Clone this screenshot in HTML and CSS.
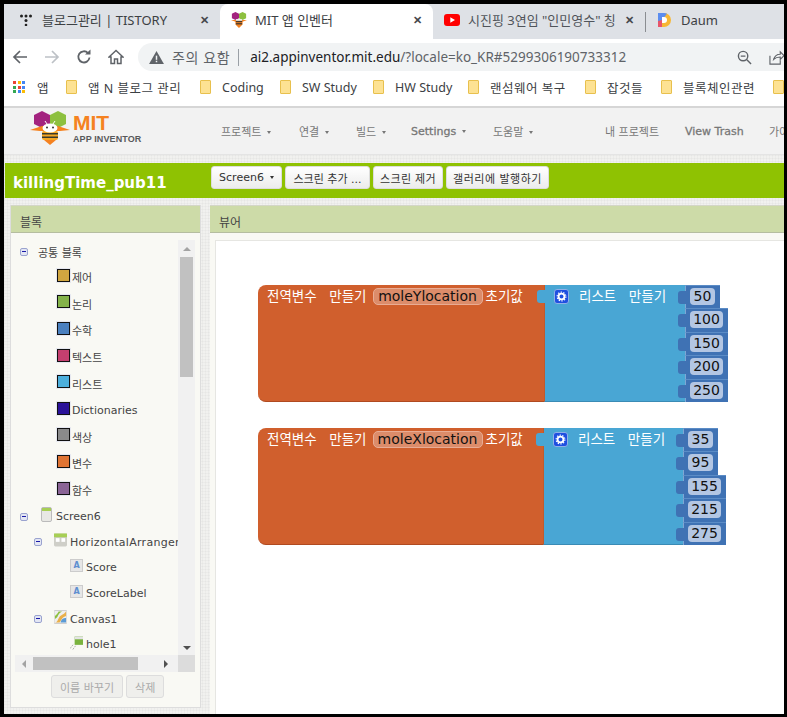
FILE: index.html
```html
<!DOCTYPE html>
<html lang="ko">
<head>
  <meta charset="UTF-8">
  <title>MIT 앱 인벤터</title>
  <link rel="stylesheet" href="styles.css">
</head>
<body>

<div class="window">

  <!-- Browser chrome -->
  <div class="tabstrip">
    <div class="tab tab-first">
      <svg class="tab-icon" viewBox="0 0 12 12"><circle cx="1.500" cy="2" r="1.500" fill="#222"/><circle cx="6" cy="2" r="1.500" fill="#222"/><circle cx="10.500" cy="2" r="1.500" fill="#222"/><circle cx="6" cy="6.500" r="1.500" fill="#222"/><circle cx="6" cy="11" r="1.300" fill="#222"/></svg>
      <span class="tab-title">블로그관리 | TISTORY</span>
      <span class="tab-close">✕</span>
    </div>
    <div class="tab tab-active">
      <svg class="tab-icon" viewBox="0 0 18 18"><polygon points="5,0 9,2 9,7 5,9 1,7 1,2" fill="#a3237f"/><polygon points="13,0 17,2 17,7 13,9 9,7 9,2" fill="#8dc03f"/><path d="M0 9h18l-5 2v3l-4 4-4-4v-3z" fill="#f58220"/><rect x="5.500" y="8" width="7" height="2" fill="#eee"/><rect x="5.500" y="10" width="7" height="1.500" fill="#4a3a2a"/><rect x="5.500" y="12.500" width="7" height="1.500" fill="#4a3a2a"/></svg>
      <span class="tab-title">MIT 앱 인벤터</span>
      <span class="tab-close">✕</span>
    </div>
    <div class="tab tab-third">
      <svg class="tab-icon" viewBox="0 0 16 12"><rect width="16" height="12" rx="3" fill="#f00"/><polygon points="6.300,3.200 11,6 6.300,8.800" fill="#fff"/></svg>
      <span class="tab-title tab-cut">시진핑 3연임 "인민영수" 칭</span>
      <span class="tab-close">✕</span>
    </div>
    <div class="tab tab-last">
      <svg class="tab-icon" viewBox="0 0 16 16"><path d="M1 1h6a7 7 0 0 1 0 14H1z" fill="#f7b733"/><path d="M1 1h6a7 7 0 0 1 3 .7L5 8v7H1z" fill="#5b8def"/><path d="M1 15V9l4-1v7z" fill="#e8556a"/><path d="M5 5h2a3 3 0 0 1 0 6H5z" fill="#fff"/></svg>
      <span class="tab-title">Daum</span>
    </div>
  </div>

  <div class="toolbar">
    <svg class="tool" viewBox="0 0 16 16"><path d="M15 8H2M8 2 2 8l6 6" fill="none" stroke="#5f6368" stroke-width="1.700"/></svg>
    <svg class="tool" viewBox="0 0 16 16"><path d="M1 8h13M8 2l6 6-6 6" fill="none" stroke="#bdc1c6" stroke-width="1.700"/></svg>
    <svg class="tool" viewBox="0 0 16 16"><path d="M13.500 8.500A5.600 5.600 0 1 1 12 4" fill="none" stroke="#5f6368" stroke-width="1.800"/><polygon points="9,5.500 14.500,5.500 14.500,0.500" fill="#5f6368"/></svg>
    <svg class="tool" viewBox="0 0 16 16"><path d="M8 1.500 1 8h2v6.500h3.500V10h3v4.500H13V8h2z" fill="none" stroke="#5f6368" stroke-width="1.500"/></svg>
    <div class="omnibox">
      <svg class="warn" viewBox="0 0 16 14"><path d="M8 0 16 14H0z" fill="#5f6368"/><rect x="7.200" y="5" width="1.600" height="4.500" fill="#f1f3f4"/><rect x="7.200" y="10.500" width="1.600" height="1.600" fill="#f1f3f4"/></svg>
      <span class="warn-text">주의 요함</span>
      <span class="omni-sep"></span>
      <span class="url">ai2.appinventor.mit.edu<span class="url-rest">/?locale=ko_KR#5299306190733312</span></span>
      <svg class="zoom-icon" viewBox="0 0 16 16"><circle cx="6.500" cy="6.500" r="5" fill="none" stroke="#5f6368" stroke-width="1.500"/><path d="M10.500 10.500 15 15M4 6.500h5" stroke="#5f6368" stroke-width="1.500"/></svg>
      <svg class="share-icon" viewBox="0 0 16 16"><path d="M1 6v9h11v-4M5 10c1-4 4-5.500 7-5.500V2l4 4-4 4V7.500c-3 0-5 .5-7 2.500z" fill="none" stroke="#5f6368" stroke-width="1.200"/></svg>
    </div>
  </div>

  <div class="bookmarks">
    <div class="apps-grid">
      <i class="r"></i><i class="y"></i><i class="b"></i>
      <i class="g"></i><i class="r"></i><i class="b"></i>
      <i class="g"></i><i class="b"></i><i class="y"></i>
    </div>
    <span class="bm-text bm-apps">앱</span>
    <span class="folder"></span><span class="bm-text bm-w1 bm-kr">앱 N 블로그 관리</span>
    <span class="folder"></span><span class="bm-text bm-w2">Coding</span>
    <span class="folder"></span><span class="bm-text bm-w3">SW Study</span>
    <span class="folder"></span><span class="bm-text bm-w4">HW Study</span>
    <span class="folder"></span><span class="bm-text bm-w5 bm-kr">랜섬웨어 복구</span>
    <span class="folder"></span><span class="bm-text bm-w6 bm-kr">잡것들</span>
    <span class="folder"></span><span class="bm-text bm-w7 bm-kr">블록체인관련</span>
    <span class="folder"></span>
  </div>

  <!-- App Inventor page -->
  <div class="page">
    <div class="topnav">
      <div class="logo">
        <svg class="logo-mark" viewBox="0 0 40 34"><polygon points="12,0 20,4 20,13 12,17 4,13 4,4" fill="#a3237f"/><polygon points="28,0 36,4 36,13 28,17 20,13 20,4" fill="#8dc03f"/><path d="M0 19 12 15h16l12 4-10 1H10z" fill="#f58220"/><path d="M15 10l2 3M25 10l-2 3" stroke="#fff" stroke-width="1"/><rect x="12" y="20" width="16" height="9" rx="2" fill="#f5a623"/><rect x="12" y="22" width="16" height="1.500" fill="#3a3a2a"/><rect x="12" y="25.500" width="16" height="1.500" fill="#3a3a2a"/><ellipse cx="20" cy="17" rx="7.500" ry="4.500" fill="#fff"/><circle cx="17" cy="16.500" r="1" fill="#333"/><circle cx="23" cy="16.500" r="1" fill="#333"/><polygon points="14,29 26,29 20,34" fill="#f58220"/></svg>
        <div class="logo-words">
          <div class="logo-mit">MIT</div>
          <div class="logo-app">APP INVENTOR</div>
        </div>
      </div>
      <div class="menu">
        <span class="menu-item m-project">프로젝트<b class="caret"></b></span>
        <span class="menu-item m-connect">연결<b class="caret"></b></span>
        <span class="menu-item m-build">빌드<b class="caret"></b></span>
        <span class="menu-item m-settings">Settings<b class="caret"></b></span>
        <span class="menu-item m-help">도움말<b class="caret"></b></span>
        <span class="menu-item m-mine">내 프로젝트</span>
        <span class="menu-item m-trash">View Trash</span>
        <span class="menu-item">가이드</span>
      </div>
    </div>

    <div class="designbar">
      <div class="project-name">killingTime_pub11</div>
      <div class="bar-buttons">
        <button class="bar-btn b-screen">Screen6<b class="caret"></b></button>
        <button class="bar-btn b-add">스크린 추가 ...</button>
        <button class="bar-btn b-remove">스크린 제거</button>
        <button class="bar-btn b-gallery">갤러리에 발행하기</button>
      </div>
    </div>

    <div class="workarea">
      <div class="blocks-panel">
        <div class="panel-head">블록</div>
        <div class="panel-body">
          <div class="tree-wrap">
            <div class="tree">
              <div class="row row-top lv0"><span class="toggle"></span>공통 블록</div>
              <div class="row lv-cat"><span class="swatch" style="background:#d0a640"></span>제어</div>
              <div class="row lv-cat"><span class="swatch" style="background:#84b34a"></span>논리</div>
              <div class="row lv-cat"><span class="swatch" style="background:#4a80bf"></span>수학</div>
              <div class="row lv-cat"><span class="swatch" style="background:#c43f6f"></span>텍스트</div>
              <div class="row lv-cat"><span class="swatch" style="background:#4cafdc"></span>리스트</div>
              <div class="row lv-cat"><span class="swatch" style="background:#2a1299"></span>Dictionaries</div>
              <div class="row lv-cat"><span class="swatch" style="background:#8a8a8a"></span>색상</div>
              <div class="row lv-cat"><span class="swatch" style="background:#df7434"></span>변수</div>
              <div class="row lv-cat"><span class="swatch" style="background:#8a6496"></span>함수</div>
              <div class="row lv0"><span class="toggle"></span>
                <svg class="cico cico-screen" viewBox="0 0 11 15"><rect x=".5" y=".5" width="10" height="14" rx="1.500" fill="#e8e8e4" stroke="#bbb"/><rect x="1" y="1" width="9" height="3" fill="#a7cf55"/></svg>
                Screen6</div>
              <div class="row lv1"><span class="toggle"></span>
                <svg class="cico" viewBox="0 0 14 14"><rect width="14" height="14" rx="1.500" fill="#cfcfc8"/><rect width="14" height="4" fill="#a7cf55"/><rect x="2" y="5" width="4" height="4" fill="#fff"/><rect x="8" y="5" width="4" height="4" fill="#fff"/></svg>
                <span class="wide">HorizontalArranger</span></div>
              <div class="row lv2"><span class="label-ico">A</span>Score</div>
              <div class="row lv2"><span class="label-ico">A</span>ScoreLabel</div>
              <div class="row lv1"><span class="toggle"></span>
                <svg class="cico" viewBox="0 0 14 14"><rect width="14" height="14" rx="1" fill="#eee" stroke="#ccc"/><path d="M1 9c3-1 3-4 5-6s3-2 3-2H5C4 3 2 5 1 6z" fill="#8dc03f"/><path d="M1 13c4-1 3-6 7-8s4-3 5-4v5c-4 1-4 3-7 7z" fill="#e9b04a"/><path d="M13 8c-3 0-5 1-6 5h6z" fill="#5b9bd5"/></svg>
                Canvas1</div>
              <div class="row lv2"><svg class="cico sprite" viewBox="0 0 14 14"><rect x="5" y="0" width="9" height="9" fill="#7ab33e"/><rect x="5" y="0" width="9" height="3" fill="#e4e4e4"/><path d="M0 13 4 8M3 14l3-4" stroke="#aaa" stroke-width="1" stroke-dasharray="2 1"/></svg>hole1</div>
            </div>
            <div class="vscroll">
              <span class="arrow-up"></span>
              <span class="vthumb"></span>
              <span class="arrow-down"></span>
            </div>
          </div>
          <div class="hscroll">
            <span class="arrow-left"></span>
            <span class="hthumb"></span>
            <span class="arrow-right"></span>
            <span class="corner"></span>
          </div>
          <div class="panel-buttons">
            <button class="dim-btn">이름 바꾸기</button>
            <button class="dim-btn">삭제</button>
          </div>
        </div>
      </div>

      <div class="viewer-panel">
        <div class="panel-head">뷰어</div>
        <div class="workspace">

          <div class="block-group group-y">
            <div class="global-block">
              <span class="blk-text">전역변수&nbsp; 만들기</span>
              <span class="field">moleYlocation</span>
              <span class="blk-text">초기값</span>
            </div>
            <div class="list-block">
              <span class="puzzle puzzle-in"></span>
              <span class="gear"><svg viewBox="0 0 12 12"><circle cx="6" cy="6" r="3.200" fill="none" stroke="#fff" stroke-width="2"/><circle cx="6" cy="6" r="4.800" fill="none" stroke="#fff" stroke-width="1.200" stroke-dasharray="1.500 1.500"/></svg></span>
              <span class="blk-text list-title">리스트&nbsp; 만들기</span>
            </div>
            <div class="values">
              <div class="value w50"><span class="puzzle"></span><span class="num">50</span></div>
              <div class="value w100"><span class="puzzle"></span><span class="num">100</span></div>
              <div class="value w100"><span class="puzzle"></span><span class="num">150</span></div>
              <div class="value w100"><span class="puzzle"></span><span class="num">200</span></div>
              <div class="value w100"><span class="puzzle"></span><span class="num">250</span></div>
            </div>
          </div>

          <div class="block-group group-x">
            <div class="global-block">
              <span class="blk-text">전역변수&nbsp; 만들기</span>
              <span class="field">moleXlocation</span>
              <span class="blk-text">초기값</span>
            </div>
            <div class="list-block">
              <span class="puzzle puzzle-in"></span>
              <span class="gear"><svg viewBox="0 0 12 12"><circle cx="6" cy="6" r="3.200" fill="none" stroke="#fff" stroke-width="2"/><circle cx="6" cy="6" r="4.800" fill="none" stroke="#fff" stroke-width="1.200" stroke-dasharray="1.500 1.500"/></svg></span>
              <span class="blk-text list-title">리스트&nbsp; 만들기</span>
            </div>
            <div class="values">
              <div class="value w50"><span class="puzzle"></span><span class="num">35</span></div>
              <div class="value w50"><span class="puzzle"></span><span class="num">95</span></div>
              <div class="value w100"><span class="puzzle"></span><span class="num">155</span></div>
              <div class="value w100"><span class="puzzle"></span><span class="num">215</span></div>
              <div class="value w100"><span class="puzzle"></span><span class="num">275</span></div>
            </div>
          </div>

        </div>
      </div>
    </div>
  </div>
</div>

</body>
</html>
```

FILE: styles.css
```css
:root {
  --kr: "DejaVu Sans", "Noto Sans CJK KR", sans-serif;
  --chrome: "Noto Sans", "Noto Sans CJK KR", sans-serif;
  --green: #8fc202;
  --panel-head: #cddba8;
  --panel-bg: #f9f9f4;
  --page-bg: #f1f1ef;
  --orange: #d05f2d;
  --blue: #49a6d4;
  --value: #3f72b4;
}

* {
  box-sizing: border-box;
}

html, body {
  margin: 0;
  padding: 0;
  height: 717px;
  overflow: hidden;
  background: #000;
}

.window {
  height: 710px;
  margin: 4px 3px 3px 4px;
  overflow: hidden;
  display: flex;
  flex-direction: column;
  background: #fff;
}

/* tabs */
.tabstrip {
  height: 35px;
  flex: none;
  display: flex;
  background: #dee1e6;
  font-family: var(--chrome);
  font-size: 13px;
  color: #3c4043;
}
.tab {
  display: flex;
  align-items: center;
  height: 35px;
  position: relative;
}
.tab-first {
  width: 216px;
  padding: 0 0 4px 16px;
}
.tab-active {
  width: 213px;
  padding: 0 0 4px 11px;
  background: #fff;
  border-radius: 8px 8px 0 0;
}
.tab-third {
  width: 212px;
  padding: 0 0 4px 11px;
}
.tab-last {
  flex: 1;
  padding: 0 0 4px 12px;
}
.tab-last::before {
  content: "";
  position: absolute;
  left: 0;
  top: 8px;
  width: 1px;
  height: 20px;
  background: #8a8d91;
}
.tab-icon {
  width: 16px;
  height: 16px;
  flex: none;
  margin-right: 8px;
}
.tab-first .tab-icon {
  width: 12px;
  height: 12px;
  margin-right: 10px;
}
.tab-title {
  flex: 1;
  white-space: nowrap;
  overflow: hidden;
}
.tab-cut {
  color: #50545a;
}
.tab-close {
  width: 14px;
  margin-right: 6px;
  font-size: 11px;
  font-weight: 700;
  color: #45484c;
}

/* address bar */
.toolbar {
  height: 32px;
  flex: none;
  display: flex;
  align-items: flex-start;
  background: #fff;
  padding: 4px 0 0 8px;
}
.tool {
  width: 16px;
  height: 16px;
  flex: none;
  margin: 6px 16px 0 0;
}
.omnibox {
  flex: 1;
  height: 28px;
  margin-left: -2px;
  background: #f1f3f4;
  border-radius: 14px 0 0 14px;
  display: flex;
  align-items: center;
  font-family: var(--chrome);
  font-size: 13.500px;
  padding-left: 11px;
  white-space: nowrap;
}
.warn {
  width: 15px;
  height: 13px;
  margin-right: 8px;
}
.warn-text {
  color: #5f6368;
  font-size: 14px;
  letter-spacing: .6px;
}
.omni-sep {
  width: 1px;
  height: 17px;
  background: #9aa0a6;
  margin: 0 11px 0 8px;
}
.url {
  color: #202124;
  flex: 1;
}
.url-rest {
  color: #5f6368;
}
.zoom-icon {
  width: 15px;
  height: 15px;
  margin-right: 17px;
}
.share-icon {
  width: 15px;
  height: 15px;
}

/* bookmarks */
.bookmarks {
  height: 37px;
  flex: none;
  display: flex;
  align-items: center;
  padding: 0 0 3px 9px;
  border-bottom: 2px solid #d6d6d6;
  font-family: var(--chrome);
  font-size: 12.500px;
  color: #3c4043;
  white-space: nowrap;
  overflow: hidden;
}
.apps-grid {
  width: 12px;
  height: 12px;
  display: grid;
  grid-template-columns: repeat(3, 3px);
  grid-auto-rows: 3px;
  gap: 1.500px;
  flex: none;
}
.apps-grid .r { background: #ea4335; }
.apps-grid .y { background: #fbbc04; }
.apps-grid .b { background: #4285f4; }
.apps-grid .g { background: #34a853; }
.bm-text {
  display: inline-block;
  flex: none;
}
.bm-kr { letter-spacing: .5px; }
.bm-apps { width: 29px; margin-left: 12px; }
.bm-w1 { width: 112px; }
.bm-w2 { width: 58px; }
.bm-w3 { width: 71px; }
.bm-w4 { width: 73px; }
.bm-w5 { width: 95px; }
.bm-w6 { width: 54px; }
.bm-w7 { width: 90px; }
.folder {
  width: 11px;
  height: 14px;
  flex: none;
  margin-right: 11px;
  background: #fde293;
  border: 1px solid #e8c04d;
  border-radius: 1px;
}

/* page */
.page {
  flex: 1;
  min-height: 0;
  display: flex;
  flex-direction: column;
  background-color: var(--page-bg);
  background-image:
    repeating-linear-gradient(90deg, rgba(0, 0, 0, .025) 0 1px, transparent 1px 3px),
    repeating-linear-gradient(0deg, rgba(0, 0, 0, .025) 0 1px, transparent 1px 3px);
}
.topnav {
  height: 47px;
  flex: none;
  display: flex;
  background: #f2f2f2;
  border-bottom: 1px solid #e4e4e4;
  font-family: var(--kr);
}
.logo {
  width: 217px;
  padding: 3px 0 0 26px;
  display: flex;
  flex: none;
}
.logo-mark {
  width: 40px;
  height: 34px;
  margin-right: 3px;
}
.logo-mit {
  font-family: "Liberation Sans", sans-serif;
  font-size: 21px;
  font-weight: 700;
  color: #f58220;
  line-height: 20px;
  margin-top: 2px;
}
.logo-app {
  font-family: "Liberation Sans", sans-serif;
  font-size: 9px;
  font-weight: 700;
  color: #58595b;
  line-height: 12px;
  letter-spacing: .1px;
}
.menu {
  flex: 1;
  min-width: 0;
  display: flex;
  align-items: center;
  height: 46px;
  font-size: 11px;
  color: #777;
  white-space: nowrap;
}
.menu-item {
  display: inline-block;
  flex: none;
}
.m-project { width: 78px; }
.m-connect { width: 57px; }
.m-build { width: 55px; }
.m-settings { width: 82px; -webkit-text-stroke: .3px #777; }
.m-help { width: 112px; }
.m-mine { width: 80px; }
.m-trash { width: 84px; -webkit-text-stroke: .3px #777; }
.caret {
  display: inline-block;
  width: 0;
  height: 0;
  margin: 0 0 2px 6px;
  border: 2px solid transparent;
  border-top: 3px solid #777;
  border-bottom: 0;
}
.designbar {
  height: 35px;
  flex: none;
  margin-top: 8px;
  margin-left: 1px;
  display: flex;
  align-items: center;
  background: var(--green);
  font-family: var(--kr);
}
.project-name {
  width: 206px;
  padding: 5px 0 0 8px;
  font-size: 15px;
  font-weight: 700;
  color: #fff;
  white-space: nowrap;
}
.bar-buttons {
  display: flex;
  gap: 3px;
  margin-top: -6px;
}
.bar-btn {
  height: 23px;
  padding: 0;
  font-family: var(--kr);
  font-size: 11px;
  color: #333;
  background: linear-gradient(#fff, #ececec);
  border: 1px solid #ddd;
  border-radius: 3px;
  white-space: nowrap;
}
.b-screen { width: 71px; }
.b-add { width: 85px; }
.b-remove { width: 70px; letter-spacing: .3px; }
.b-gallery { width: 103px; letter-spacing: .5px; }
.bar-btn .caret {
  border-top-color: #333;
}

/* panels */
.workarea {
  flex: 1;
  min-height: 0;
  display: flex;
  padding: 7px 0 0 6px;
  gap: 9px;
  font-family: var(--kr);
}
.blocks-panel {
  width: 191px;
  height: 503px;
  flex: none;
  display: flex;
  flex-direction: column;
  background: var(--panel-bg);
  border: 1px solid #ddd;
  border-top: 0;
}
.panel-head {
  height: 28px;
  flex: none;
  padding: 8px 0 0 9px;
  background: var(--panel-head);
  border-top: 1px solid #d4d6c8;
  border-bottom: 1px solid #b5bda0;
  font-size: 12px;
  line-height: 18px;
  color: #444;
}
.panel-body {
  flex: 1;
  padding: 7px 5px 0 4px;
  display: flex;
  flex-direction: column;
}
.tree-wrap {
  height: 415px;
  flex: none;
  display: flex;
}
.tree {
  flex: 1;
  min-width: 0;
  overflow: hidden;
  font-size: 11px;
  color: #444;
  white-space: nowrap;
}
.row {
  height: 26px;
  display: flex;
  align-items: center;
}
.row-top {
  height: 25px;
  margin-top: -1px;
}
.lv-cat {
  height: 26.600px;
}
.lv0:not(.row-top) {
  height: 26.600px;
}
.lv1 {
  height: 25px;
}
.wide {
  letter-spacing: .3px;
}
.lv0 { padding-left: 5px; }
.lv1 { padding-left: 19px; }
.lv2 { padding-left: 55px; }
.lv-cat { padding-left: 42px; }
.toggle {
  width: 8px;
  height: 8px;
  flex: none;
  margin-right: 10px;
  position: relative;
  background: #e3e6f3;
  border: 1px solid #9aa3cf;
  border-radius: 2px;
}
.lv1 .toggle {
  margin-right: 12px;
}
.toggle::after {
  content: "";
  position: absolute;
  left: 1px;
  right: 1px;
  top: 2px;
  height: 1px;
  background: #1a1aa8;
}
.swatch {
  width: 13px;
  height: 13px;
  flex: none;
  margin: 0 2px 4px 0;
  border: 1px solid #111;
  box-shadow: 0 0 0 1px #e6e8f0;
}
.cico {
  width: 13px;
  height: 14px;
  flex: none;
  margin: 0 3px 4px 0;
}
.cico-screen {
  width: 11px;
  height: 15px;
  margin-right: 4px;
  margin-left: 3px;
}
.label-ico {
  width: 13px;
  height: 13px;
  flex: none;
  margin: 0 3px 4px 0;
  background: #e6e6e6;
  border: 1px solid #ccc;
  color: #5f8fd0;
  font-size: 8px;
  font-weight: 700;
  line-height: 11px;
  text-align: center;
}
.vscroll {
  width: 17px;
  flex: none;
  display: flex;
  flex-direction: column;
  align-items: center;
  background: #f1f1f1;
}
.vthumb {
  width: 13px;
  height: 120px;
  background: #c1c1c1;
  margin-top: 6px;
}
.arrow-up {
  margin-top: 7px;
  border: 4px solid transparent;
  border-top: 0;
  border-bottom: 4px solid #a3a3a3;
}
.arrow-down {
  margin-top: auto;
  margin-bottom: 5px;
  border: 4px solid transparent;
  border-bottom: 0;
  border-top: 4px solid #505050;
}
.hscroll {
  height: 17px;
  flex: none;
  display: flex;
  align-items: center;
  background: #f1f1f1;
}
.hthumb {
  width: 105px;
  height: 13px;
  margin-left: 7px;
  background: #c1c1c1;
}
.arrow-left {
  margin-left: 7px;
  border: 4px solid transparent;
  border-left: 0;
  border-right: 4px solid #a3a3a3;
}
.arrow-right {
  margin-left: 26px;
  border: 4px solid transparent;
  border-right: 0;
  border-left: 4px solid #505050;
}
.corner {
  width: 17px;
  height: 17px;
  margin-left: auto;
  background: #dcdcdc;
}
.panel-buttons {
  display: flex;
  gap: 3px;
  margin-top: 3px;
  padding-left: 36px;
}
.dim-btn {
  height: 23px;
  padding: 0 8px;
  font-family: var(--kr);
  font-size: 11px;
  color: #aaa;
  background: #efefec;
  border: 1px solid #ddd;
  border-radius: 3px;
  white-space: nowrap;
}
.viewer-panel {
  flex: 1;
  min-width: 0;
  display: flex;
  flex-direction: column;
  background: var(--panel-bg);
}
.workspace {
  flex: 1;
  position: relative;
  margin: 7px 0 0 5px;
  background: #fff;
  border-top: 1px solid #e6e6e2;
  border-left: 1px solid #e6e6e2;
}

/* blocks sit on a free canvas */
.block-group {
  position: absolute;
  left: 42px;
  display: flex;
  height: 117px;
  font-size: 13.500px;
}
.group-y { top: 44px; }
.group-x { top: 187px; }
.global-block {
  width: 286px;
  padding: 2px 0 0 9px;
  display: flex;
  align-items: flex-start;
  background: var(--orange);
  border-radius: 8px 0 0 8px;
  border-bottom: 1px solid #b04a20;
}
.group-x .global-block {
  width: 285px;
}
.blk-text {
  color: #fff;
  line-height: 18px;
  white-space: nowrap;
  word-spacing: 2px;
}
.field {
  width: 110px;
  height: 17px;
  flex: none;
  margin: 1px 3px 0 6px;
  font-size: 14px;
  text-align: center;
  line-height: 15px;
  color: #111;
  background: #dc8c6a;
  border: 1px solid #e8ac94;
  border-radius: 5px;
}
.list-block {
  width: 141px;
  padding: 2px 0 0 9px;
  display: flex;
  align-items: flex-start;
  position: relative;
  background: var(--blue);
  border-bottom: 1px solid #3a8bb5;
  border-left: 1px solid #c05a2c;
}
.group-x .list-block {
  width: 140px;
}
.list-title {
  margin-left: 10px;
}
.gear {
  width: 15px;
  height: 15px;
  flex: none;
  margin-top: 2px;
  padding: 1px;
  background: #1f4fe0;
  border: 1px solid #8fb0e8;
  border-radius: 3px;
  display: flex;
}
.puzzle {
  position: absolute;
  left: -8px;
  top: 5px;
  width: 8px;
  height: 13px;
  background: var(--value);
  border-radius: 3px 0 0 3px;
}
.puzzle-in {
  background: var(--blue);
}
.values {
  display: flex;
  flex-direction: column;
  align-items: flex-start;
}
.value {
  height: 23.400px;
  padding: 2px 5px 0 4px;
  position: relative;
  background: var(--value);
  border-top: 1px solid #5b8cc6;
  border-left: 1px solid #7fa6d4;
}
.w50 { width: 35px; }
.w100 { width: 43px; }
.num {
  display: block;
  height: 17px;
  text-align: center;
  line-height: 16px;
  font-size: 14px;
  color: #111;
  background: #b3c6e3;
  border-radius: 4px;
}
```
